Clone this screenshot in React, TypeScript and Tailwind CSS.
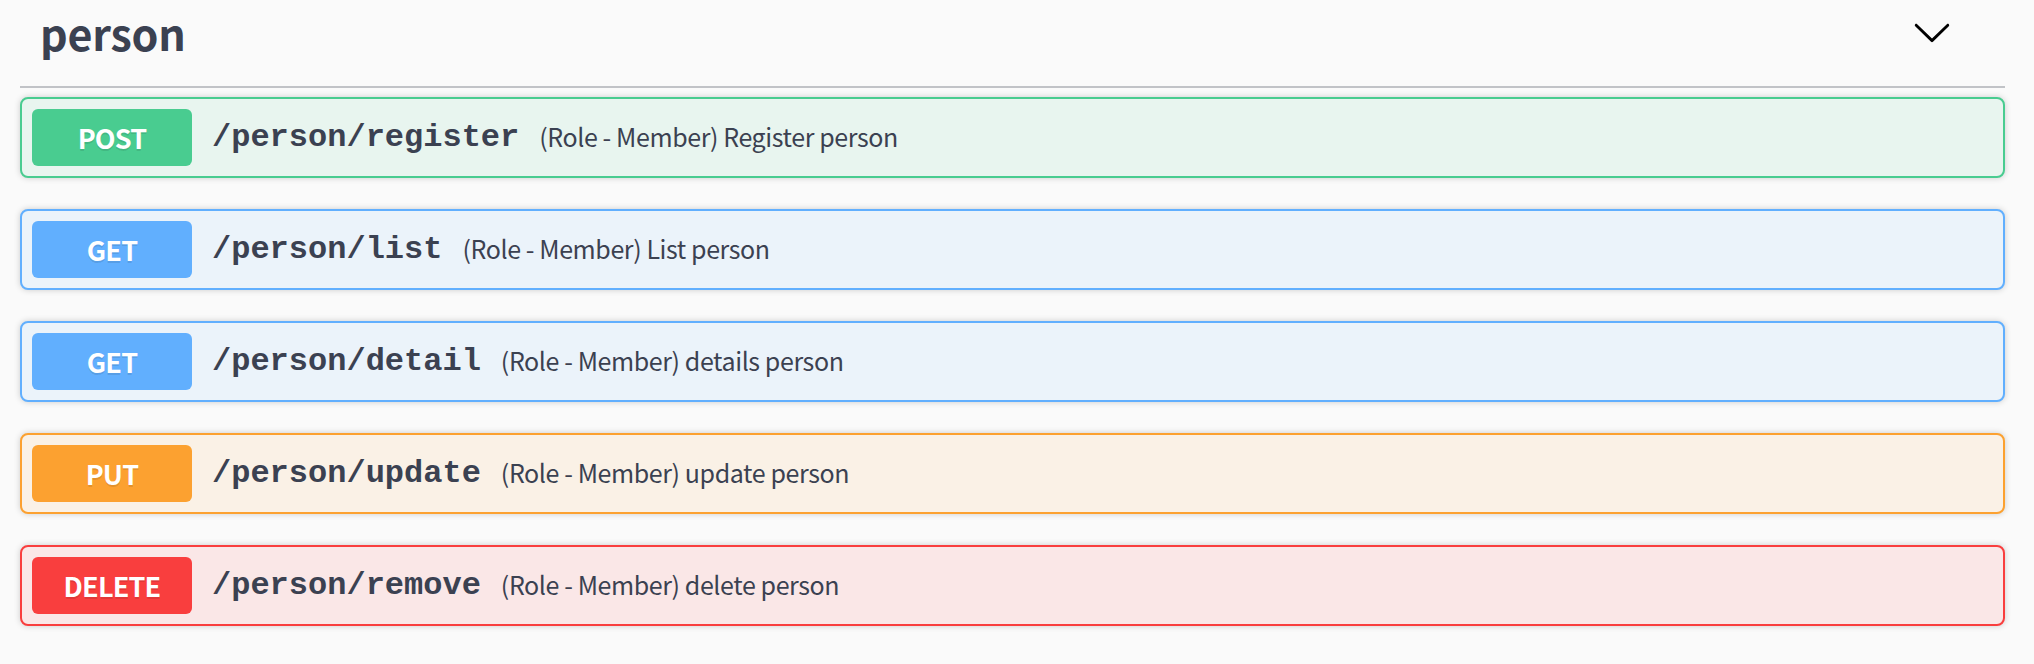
const ops = [
  { method: 'POST', path: '/person/register', desc: '(Role - Member) Register person', badge: 'bg-[#49cc90]', box: 'border-[#49cc90] bg-[#e8f5ef]' },
  { method: 'GET', path: '/person/list', desc: '(Role - Member) List person', badge: 'bg-[#61affe]', box: 'border-[#61affe] bg-[#ebf3fa]' },
  { method: 'GET', path: '/person/detail', desc: '(Role - Member) details person', badge: 'bg-[#61affe]', box: 'border-[#61affe] bg-[#ebf3fa]' },
  { method: 'PUT', path: '/person/update', desc: '(Role - Member) update person', badge: 'bg-[#fca130]', box: 'border-[#fca130] bg-[#faf1e6]' },
  { method: 'DELETE', path: '/person/remove', desc: '(Role - Member) delete person', badge: 'bg-[#f93e3e]', box: 'border-[#f93e3e] bg-[#fae7e7]' },
]

function Chevron() {
  return (
    <svg width="40" height="40" viewBox="0 0 20 20" aria-hidden="true">
      <path
        fill="#000"
        d="M17.418 6.109c.272-.268.709-.268.979 0s.271.701 0 .969l-7.908 7.83c-.27.268-.707.268-.979 0l-7.908-7.83c-.27-.268-.27-.701 0-.969.271-.268.709-.268.979 0L10 13.25l7.418-7.141z"
      />
    </svg>
  )
}

export default function App() {
  return (
    <div className="min-h-screen bg-[#fafafa] pl-[20px] pr-[29px] font-['Noto_Sans_CJK_KR',sans-serif] text-[#3b4151]">
      <div className="flex h-[88px] items-center justify-between border-b-2 border-[#c1c3c7] pl-[20px] pr-[53px]">
        <h3 className="pb-[22px] text-[43px] font-bold leading-none tracking-[-0.2px]">person</h3>
        <button className="mb-[22px]">
          <Chevron />
        </button>
      </div>
      <div className="mt-[9px] flex flex-col gap-[31px]">
        {ops.map((op) => (
          <div
            key={op.path}
            className={`flex items-center rounded-[8px] border-2 p-[10px] shadow-[0_0_6px_rgba(0,0,0,0.19)] ${op.box}`}
          >
            <span
              className={`w-[160px] rounded-[6px] py-[12px] text-center text-[27px] font-bold leading-[33px] tracking-[-0.8px] text-white text-shadow-[0_2px_0_rgba(0,0,0,0.1)] ${op.badge}`}
            >
              {op.method}
            </span>
            <span className="px-[20px] font-['Liberation_Mono',monospace] text-[32px] font-bold">{op.path}</span>
            <span className="pb-[2px] text-[25px] tracking-[-0.4px]">{op.desc}</span>
          </div>
        ))}
      </div>
    </div>
  )
}
